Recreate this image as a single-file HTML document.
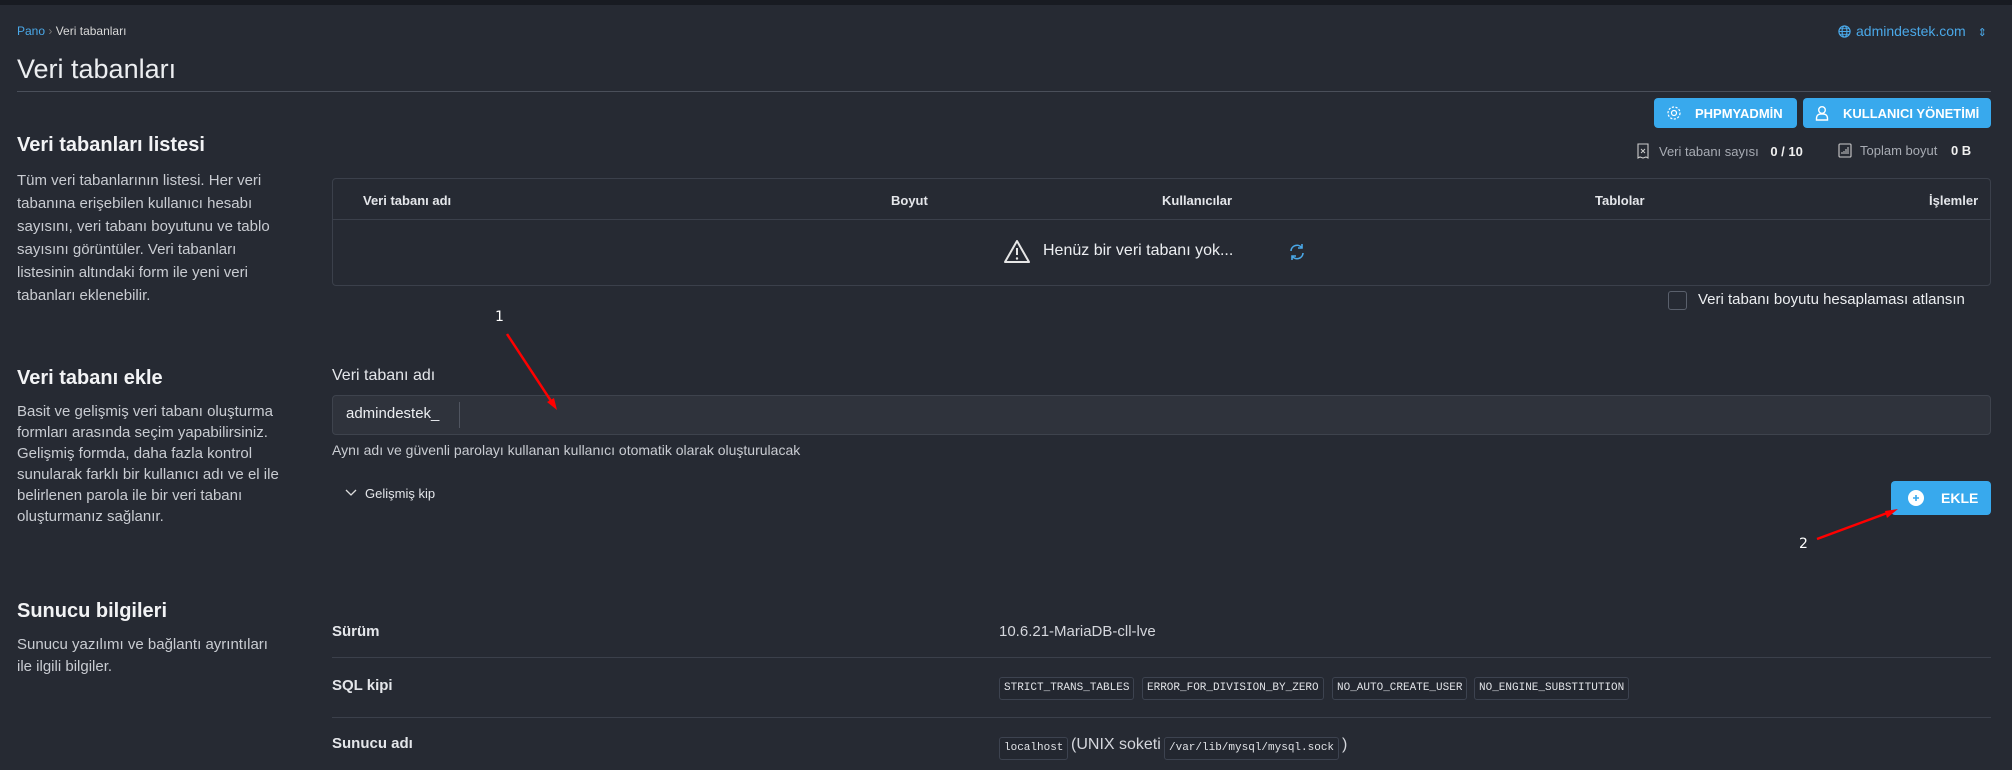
<!DOCTYPE html>
<html><head><meta charset="utf-8"><style>
*{margin:0;padding:0;box-sizing:border-box}
body{width:2012px;height:770px;background:#262a33;font-family:"Liberation Sans",sans-serif;color:#d4d6dc;position:relative;overflow:hidden}
.a{position:absolute;white-space:nowrap}
.h2{font-size:20px;font-weight:bold;color:#f2f3f5}
.desc{font-size:15px;line-height:23px;color:#c9ccd2;white-space:normal;width:278px}
.btn{position:absolute;background:#38a9ed;border-radius:4px;color:#fff;font-weight:bold;font-size:13px;display:flex;align-items:center}
.th{font-size:13px;font-weight:bold;color:#e4e6ea}
.code{position:absolute;border:1px solid #3d4350;background:#232730;border-radius:3px;font-family:"Liberation Mono",monospace;font-size:11px;color:#e0e2e6;height:23px;line-height:21px;padding:0 4px}
.lbl{font-size:15px;font-weight:bold;color:#e4e6ea}
</style></head><body>
<div class="a" style="left:0;top:0;width:2012px;height:5px;background:#181b22"></div>
<div class="a" style="left:17px;top:24px;font-size:12px"><span style="color:#4aa8e8">Pano</span> <span style="color:#777">›</span> <span style="color:#d8d8d8">Veri tabanları</span></div>
<div class="a" style="left:1838px;top:23px;font-size:14px;color:#4aa8e8">
<svg width="13" height="13" viewBox="0 0 14 14" style="vertical-align:-2px;margin-right:5px"><circle cx="7" cy="7" r="6" fill="none" stroke="#4aa8e8" stroke-width="1.3"/><ellipse cx="7" cy="7" rx="2.6" ry="6" fill="none" stroke="#4aa8e8" stroke-width="1.2"/><path d="M1 7h12M2 4h10M2 10h10" stroke="#4aa8e8" stroke-width="1"/></svg>admindestek.com <span style="font-size:11px;margin-left:8px">⇕</span></div>
<div class="a" style="left:17px;top:54px;font-size:27px;color:#eceef1">Veri tabanları</div>
<div class="a" style="left:17px;top:91px;width:1974px;height:1px;background:#4a4f5a"></div>

<div class="btn" style="left:1654px;top:98px;width:143px;height:30px"><svg width="16" height="16" viewBox="0 0 16 16" style="margin:0 13px 0 12px"><circle cx="8" cy="8" r="2.5" fill="none" stroke="#fff" stroke-width="1.2"/><circle cx="8" cy="8" r="6" fill="none" stroke="#fff" stroke-width="1.2" stroke-dasharray="2.2 1.5"/></svg>PHPMYADMİN</div>
<div class="btn" style="left:1803px;top:98px;width:188px;height:30px"><svg width="16" height="16" viewBox="0 0 16 16" style="margin:0 13px 0 11px"><circle cx="8" cy="5" r="3.3" fill="none" stroke="#fff" stroke-width="1.4"/><path d="M2.5 15v-2a4 4 0 0 1 4-4h3a4 4 0 0 1 4 4v2z" fill="none" stroke="#fff" stroke-width="1.4"/></svg>KULLANICI YÖNETİMİ</div>

<div class="a" style="left:1637px;top:143px;font-size:13px;color:#a8acb4"><svg width="12" height="16" viewBox="0 0 12 16" style="vertical-align:-3px;margin-right:10px"><path d="M1 1h10v14l-2-1-3 1-3-1-2 1z" fill="none" stroke="#ccc" stroke-width="1.1"/><path d="M4 6l4 4M8 6l-4 4" stroke="#ccc"/></svg>Veri tabanı sayısı <b style="color:#f0f0f0;margin-left:8px">0 / 10</b></div>
<div class="a" style="left:1838px;top:143px;font-size:13px;color:#a8acb4"><svg width="14" height="15" viewBox="0 0 14 15" style="vertical-align:-3px;margin-right:8px"><rect x="1" y="1" width="12" height="13" rx="1" fill="none" stroke="#ccc" stroke-width="1.1"/><path d="M4 11v-2M6 11v-3M8 11v-5M10 11v-7" stroke="#ccc"/></svg>Toplam boyut <b style="color:#f0f0f0;margin-left:10px">0 B</b></div>

<div class="a h2" style="left:17px;top:134px">Veri tabanları listesi</div>
<div class="a desc" style="left:17px;top:169px">Tüm veri tabanlarının listesi. Her veri tabanına erişebilen kullanıcı hesabı sayısını, veri tabanı boyutunu ve tablo sayısını görüntüler. Veri tabanları listesinin altındaki form ile yeni veri tabanları eklenebilir.</div>

<div class="a" style="left:332px;top:178px;width:1659px;height:108px;border:1px solid #3b404b;border-radius:4px"></div>
<div class="a" style="left:333px;top:219px;width:1657px;height:1px;background:#3b404b"></div>
<div class="a th" style="left:363px;top:193px">Veri tabanı adı</div>
<div class="a th" style="left:891px;top:193px">Boyut</div>
<div class="a th" style="left:1162px;top:193px">Kullanıcılar</div>
<div class="a th" style="left:1595px;top:193px">Tablolar</div>
<div class="a th" style="left:1929px;top:193px">İşlemler</div>
<svg class="a" style="left:1003px;top:239px" width="28" height="25" viewBox="0 0 28 25"><path d="M14 2L26 23H2z" fill="none" stroke="#e6e6e6" stroke-width="2" stroke-linejoin="round"/><path d="M14 9v7" stroke="#e6e6e6" stroke-width="2"/><circle cx="14" cy="19.5" r="1.2" fill="#e6e6e6"/></svg>
<div class="a" style="left:1043px;top:242px;font-size:16px;color:#eceef1">Henüz bir veri tabanı yok...</div>
<svg class="a" style="left:1288px;top:243px" width="18" height="18" viewBox="0 0 18 18"><path d="M3 8a6 6 0 0 1 11-3M15 10a6 6 0 0 1-11 3" fill="none" stroke="#4aa8e8" stroke-width="1.6"/><path d="M14 1v4h-4M4 17v-4h4" fill="none" stroke="#4aa8e8" stroke-width="1.6"/></svg>

<div class="a" style="left:1668px;top:291px;width:19px;height:19px;border:1px solid #5a606c;border-radius:3px"></div>
<div class="a" style="left:1698px;top:291px;font-size:15px;color:#eceef1">Veri tabanı boyutu hesaplaması atlansın</div>

<div class="a" style="left:495px;top:309px;font-size:14px;color:#fff;font-family:'DejaVu Sans',sans-serif">1</div>

<div class="a h2" style="left:17px;top:367px">Veri tabanı ekle</div>
<div class="a desc" style="left:17px;top:401px;line-height:21px">Basit ve gelişmiş veri tabanı oluşturma formları arasında seçim yapabilirsiniz. Gelişmiş formda, daha fazla kontrol sunularak farklı bir kullanıcı adı ve el ile belirlenen parola ile bir veri tabanı oluşturmanız sağlanır.</div>
<div class="a" style="left:332px;top:367px;font-size:16px;color:#e4e6ea">Veri tabanı adı</div>
<div class="a" style="left:332px;top:395px;width:1659px;height:40px;background:#2f333c;border:1px solid #3e434d;border-radius:4px"></div>
<div class="a" style="left:346px;top:405px;font-size:15px;color:#eceef1">admindestek_</div>
<div class="a" style="left:459px;top:402px;width:1px;height:26px;background:#505560"></div>
<div class="a" style="left:332px;top:442px;font-size:14px;color:#c9ccd2">Aynı adı ve güvenli parolayı kullanan kullanıcı otomatik olarak oluşturulacak</div>
<div class="a" style="left:345px;top:486px;font-size:13px;color:#e4e6ea"><svg width="12" height="8" viewBox="0 0 12 8" style="margin-right:8px;vertical-align:1px"><path d="M1 1l5 5 5-5" fill="none" stroke="#ddd" stroke-width="1.3"/></svg>Gelişmiş kip</div>
<div class="btn" style="left:1891px;top:481px;width:100px;height:34px;font-size:14px"><svg width="16" height="16" viewBox="0 0 16 16" style="margin:0 17px 0 17px"><circle cx="8" cy="8" r="8" fill="#fff"/><path d="M8 5v6M5 8h6" stroke="#38a9ed" stroke-width="1.6"/></svg>EKLE</div>
<div class="a" style="left:1799px;top:536px;font-size:14px;color:#fff;font-family:'DejaVu Sans',sans-serif">2</div>

<div class="a h2" style="left:17px;top:600px">Sunucu bilgileri</div>
<div class="a desc" style="left:17px;top:634px;line-height:22px;width:270px">Sunucu yazılımı ve bağlantı ayrıntıları ile ilgili bilgiler.</div>
<div class="a lbl" style="left:332px;top:623px">Sürüm</div>
<div class="a" style="left:999px;top:623px;font-size:15px;color:#d4d6dc">10.6.21-MariaDB-cll-lve</div>
<div class="a" style="left:332px;top:657px;width:1659px;height:1px;background:#3b404b"></div>
<div class="a lbl" style="left:332px;top:677px">SQL kipi</div>
<div class="code" style="left:999px;top:677px">STRICT_TRANS_TABLES</div>
<div class="code" style="left:1142px;top:677px">ERROR_FOR_DIVISION_BY_ZERO</div>
<div class="code" style="left:1332px;top:677px">NO_AUTO_CREATE_USER</div>
<div class="code" style="left:1474px;top:677px">NO_ENGINE_SUBSTITUTION</div>
<div class="a" style="left:332px;top:717px;width:1659px;height:1px;background:#3b404b"></div>
<div class="a lbl" style="left:332px;top:735px">Sunucu adı</div>
<div class="code" style="left:999px;top:737px">localhost</div>
<div class="a" style="left:1071px;top:736px;font-size:16px;color:#d4d6dc">(UNIX soketi</div>
<div class="code" style="left:1164px;top:737px">/var/lib/mysql/mysql.sock</div>
<div class="a" style="left:1342px;top:736px;font-size:16px;color:#d4d6dc">)</div>

<svg class="a" style="left:0;top:0" width="2012" height="770"><path d="M507 334L553 404" stroke="#f00" stroke-width="2.5"/><path d="M557 410l-10-8 7-4z" fill="#f00"/><path d="M1817 539L1890 512" stroke="#f00" stroke-width="2.5"/><path d="M1898 509l-11 9-2-7z" fill="#f00"/></svg>
</body></html>
